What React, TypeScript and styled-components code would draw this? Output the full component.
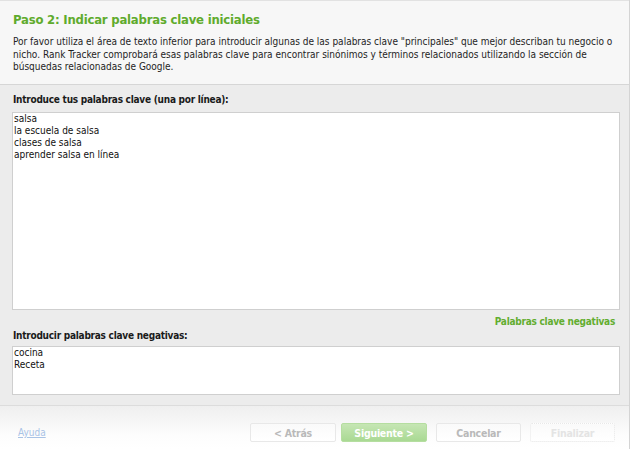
import styled, { createGlobalStyle } from "styled-components";

const GlobalStyle = createGlobalStyle`
  html, body {
    margin: 0;
    padding: 0;
    background: #ffffff;
  }
`;

const font = `"DejaVu Sans Condensed", "DejaVu Sans", sans-serif`;

const App = () => {
  return (
    <>
      <GlobalStyle />
      <Window>
        <Header>
          <Title>Paso 2: Indicar palabras clave iniciales</Title>
          <Description>
            Por favor utiliza el área de texto inferior para introducir algunas de las palabras clave
            "principales" que mejor describan tu negocio o
            <br />
            nicho. Rank Tracker comprobará esas palabras clave para encontrar sinónimos y términos
            relacionados utilizando la sección de
            <br />
            búsquedas relacionadas de Google.
          </Description>
        </Header>
        <Body>
          <Label $gap={6}>Introduce tus palabras clave (una por línea):</Label>
          <KeywordBox
            defaultValue={"salsa\nla escuela de salsa\nclases de salsa\naprender salsa en línea"}
            $height={198}
          />
          <LinkRow>
            <GreenLink>Palabras clave negativas</GreenLink>
          </LinkRow>
          <Label $gap={4}>Introducir palabras clave negativas:</Label>
          <KeywordBox defaultValue={"cocina\nReceta"} $height={49} />
        </Body>
        <Footer>
          <HelpLink>Ayuda</HelpLink>
          <Buttons>
            <Button $variant="plain" $width={86}>&lt; Atrás</Button>
            <Button $variant="primary" $width={86}>Siguiente &gt;</Button>
            <Button $variant="plain" $width={85} $gap={9}>Cancelar</Button>
            <Button $variant="disabled" $width={85} $gap={9}>Finalizar</Button>
          </Buttons>
        </Footer>
      </Window>
    </>
  );
};

export default App;

const Window = styled.div`
  width: 629px;
  height: 449px;
  display: flex;
  flex-direction: column;
  border-right: 1px solid #d4d4d4;
  font-family: ${font};
  overflow: hidden;
`;

const Header = styled.div`
  height: 85px;
  flex-shrink: 0;
  box-sizing: border-box;
  padding: 11px 12px 0 13px;
  background: #f7f7f7;
  border-top: 1px solid #e2e2e2;
  border-bottom: 1px solid #d6d6d6;
`;

const Title = styled.h1`
  margin: 0 0 8px;
  font-size: 13px;
  font-weight: bold;
  letter-spacing: -0.22px;
  color: #5fab2d;
  line-height: 16px;
`;

const Description = styled.p`
  margin: 0;
  font-size: 10px;
  line-height: 12.5px;
  color: #1e1e1e;
  white-space: nowrap;
`;

const Body = styled.div`
  flex: 1;
  background: #ececec;
  padding: 8px 9px 0 12px;
  display: flex;
  flex-direction: column;
  border-bottom: 1px solid #dcdcdc;
`;

const Label = styled.div<{ $gap: number }>`
  font-size: 10px;
  font-weight: bold;
  letter-spacing: -0.25px;
  color: #1a1a1a;
  line-height: 13px;
  padding-left: 1px;
  margin-bottom: ${(p) => p.$gap}px;
`;

const KeywordBox = styled.textarea<{ $height: number }>`
  height: ${(p) => p.$height}px;
  flex-shrink: 0;
  box-sizing: border-box;
  width: 100%;
  margin: 0;
  padding: 0 1px;
  resize: none;
  border: 1px solid #cfcfcf;
  background: #ffffff;
  font-family: ${font};
  font-size: 10px;
  line-height: 12px;
  color: #111;
  outline: none;
`;

const LinkRow = styled.div`
  display: flex;
  justify-content: flex-end;
  box-sizing: border-box;
  padding: 5px 5px 0 0;
  height: 19px;
`;

const GreenLink = styled.span`
  font-size: 10px;
  font-weight: bold;
  letter-spacing: -0.25px;
  color: #62ad2f;
  line-height: 13px;
`;

const Footer = styled.div`
  height: 43px;
  flex-shrink: 0;
  box-sizing: border-box;
  display: flex;
  align-items: flex-start;
  padding: 17px 14px 0 18px;
  background: linear-gradient(#efefef, #fdfdfd 70%, #ffffff);
`;

const HelpLink = styled.span`
  font-size: 10px;
  line-height: 19px;
  color: #a9c3e6;
  text-decoration: underline;
  flex: 1;
`;

const Buttons = styled.div`
  display: flex;
`;

const Button = styled.div<{
  $variant: "plain" | "primary" | "disabled";
  $width: number;
  $gap?: number;
}>`
  width: ${(p) => p.$width}px;
  height: 19px;
  margin-left: ${(p) => p.$gap ?? 5}px;
  box-sizing: border-box;
  display: flex;
  align-items: center;
  justify-content: center;
  font-size: 10.5px;
  font-weight: bold;
  letter-spacing: -0.25px;
  border-radius: 2px;
  color: ${(p) =>
    p.$variant === "primary" ? "#ffffff" : p.$variant === "disabled" ? "#e4e4e4" : "#b9b9b9"};
  background: ${(p) =>
    p.$variant === "primary"
      ? "linear-gradient(#c6e6b4, #a9d993)"
      : "linear-gradient(#fafafa, #ffffff)"};
  border: 1px ${(p) => (p.$variant === "disabled" ? "dotted" : "solid")}
    ${(p) => (p.$variant === "primary" ? "#b5dea0" : "#e8e8e8")};
`;
